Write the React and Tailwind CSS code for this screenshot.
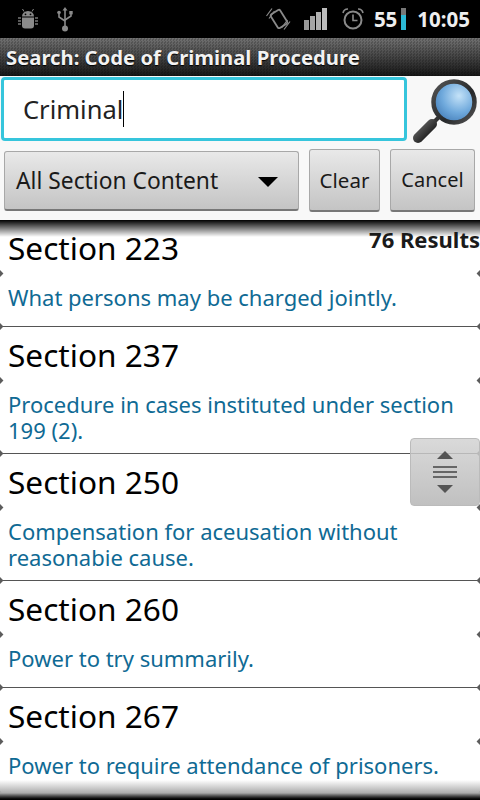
import { useState } from 'react';

const rows = [
  { title: 'Section 223', desc: 'What persons may be charged jointly.', tall: false },
  { title: 'Section 237', desc: 'Procedure in cases instituted under section 199 (2).', tall: true },
  { title: 'Section 250', desc: 'Compensation for aceusation without reasonabie cause.', tall: true },
  { title: 'Section 260', desc: 'Power to try summarily.', tall: false },
  { title: 'Section 267', desc: 'Power to require attendance of prisoners.', tall: false },
];

const Diamond = ({ className }) => (
  <span className={`absolute w-[7px] h-[7px] rotate-45 bg-[#5c5c5c] ${className}`} />
);

const AndroidIcon = () => (
  <svg width="24" height="24" viewBox="0 0 24 24" fill="#8a8a8a">
    <path d="M6 9.5a6 5.5 0 0 1 12 0z" />
    <path d="M8 4.5 6.5 2M16 4.5 17.5 2" stroke="#8a8a8a" strokeWidth="1" />
    <path d="M6 10.5h12v8a3 3 0 0 1-3 3H9a3 3 0 0 1-3-3z" />
    <path d="M2 11h3M2 14h3M2 17h3M19 11h3M19 14h3M19 17h3" stroke="#777" strokeWidth="1.3" />
    <circle cx="9.5" cy="7.3" r=".9" fill="#000" />
    <circle cx="14.5" cy="7.3" r=".9" fill="#000" />
  </svg>
);

const UsbIcon = () => (
  <svg width="18" height="26" viewBox="0 0 18 26" fill="none" stroke="#8a8a8a" strokeWidth="1.6">
    <path d="M9 3v17" />
    <path d="M9 1 6.5 4.5h5z" fill="#8a8a8a" stroke="none" />
    <path d="M3 8v3l6 4M15 8v2l-6 4" />
    <circle cx="3" cy="6.5" r="1.8" fill="#8a8a8a" stroke="none" />
    <rect x="13.3" y="5" width="3.4" height="3.4" fill="#8a8a8a" stroke="none" />
    <circle cx="9" cy="22.5" r="3" fill="#8a8a8a" stroke="none" />
  </svg>
);

const RotateIcon = () => (
  <svg width="26" height="24" viewBox="0 0 26 24" fill="none" stroke="#8a8a8a">
    <rect x="7.5" y="4" width="11" height="16" rx="1.5" strokeWidth="1.8" transform="rotate(-32 13 12)" />
    <path d="M0.5 9 6 1.5M3 11.5 8.5 4M18 22.5l6-8M15.5 21l6-8" strokeWidth="1.2" />
  </svg>
);

const SignalIcon = () => (
  <div className="flex items-end gap-px h-[22px]">
    <span className="w-[5px] h-[10px] bg-[#9a9a9a]" />
    <span className="w-[5px] h-[14px] bg-[#a5a5a5]" />
    <span className="w-[5px] h-[18px] bg-[#b0b0b0]" />
    <span className="w-[5px] h-[22px] bg-[#bcbcbc]" />
  </div>
);

const AlarmIcon = () => (
  <svg width="22" height="24" viewBox="0 0 22 24" fill="none" stroke="#8a8a8a">
    <circle cx="11" cy="13" r="8.5" strokeWidth="2" />
    <path d="M11 7.5V13.5H15.5" strokeWidth="1.6" />
    <path d="M1 6a5 5 0 0 1 5-4M21 6a5 5 0 0 0-5-4" strokeWidth="1.6" />
  </svg>
);

const SearchIcon = () => (
  <svg width="72" height="72" viewBox="0 0 72 72">
    <defs>
      <radialGradient id="lens" cx="0.62" cy="0.35" r="0.75">
        <stop offset="0" stopColor="#c4e2f8" />
        <stop offset="0.55" stopColor="#6fa9dc" />
        <stop offset="1" stopColor="#3f78b4" />
      </radialGradient>
      <linearGradient id="ring" x1="0" y1="0" x2="1" y2="1">
        <stop offset="0" stopColor="#555" />
        <stop offset="0.6" stopColor="#26282a" />
        <stop offset="1" stopColor="#555" />
      </linearGradient>
      <linearGradient id="handle" x1="0" y1="0" x2="1" y2="1">
        <stop offset="0" stopColor="#666" />
        <stop offset="1" stopColor="#111" />
      </linearGradient>
    </defs>
    <path d="M25 47 31 41" stroke="#333" strokeWidth="4" />
    <path d="M10 62 24 48" stroke="url(#handle)" strokeWidth="10" strokeLinecap="round" />
    <circle cx="46" cy="26" r="20.5" fill="url(#lens)" stroke="url(#ring)" strokeWidth="4.5" />
  </svg>
);

const BevelButton = ({ children, className }) => (
  <button className={`flex items-center rounded-[3px] border border-[#a8a8a8] border-b-[#777] border-b-2 bg-gradient-to-b from-[#e9e9e9] to-[#c4c4c4] text-[#1a1a1a] ${className}`}>
    {children}
  </button>
);

const Row = ({ title, desc, tall }) => (
  <div className={`relative border-b border-[#555] box-border flex flex-col ${tall ? 'h-[127px]' : 'h-[107px]'}`}>
    <div className="h-[54px] pl-2 pt-[6px] text-[31.6px] leading-[44px] text-black">{title}</div>
    <div className="pl-2 pr-5 pt-[10px] text-[22px] leading-[26px] text-[#0f6a94]">{desc}</div>
    <Diamond className="left-[-5px] top-[50px]" />
    <Diamond className="right-[-5px] top-[50px]" />
    <Diamond className="left-[-5px] bottom-[-4px]" />
    <Diamond className="right-[-5px] bottom-[-4px]" />
  </div>
);

export default function App() {
  const [query] = useState('Criminal');

  return (
    <div className="relative w-[480px] h-[800px] overflow-hidden bg-white font-['Noto_Sans','Open_Sans',sans-serif]">
      <div className="h-[38px] bg-black flex items-center pl-[16px] pr-[10px]">
        <AndroidIcon />
        <span className="ml-[16px]"><UsbIcon /></span>
        <div className="ml-auto flex items-center">
          <RotateIcon />
          <span className="ml-[12px]"><SignalIcon /></span>
          <span className="ml-[15px]"><AlarmIcon /></span>
          <span className="ml-[10px] text-[20.5px] font-bold text-[#eee]">55</span>
          <span className="ml-[4px] w-[5px] h-[22px] bg-gradient-to-b from-[#777] from-[30%] to-[#2bb9d6] to-[30%]" />
          <span className="ml-[11px] text-[20.5px] font-bold text-[#eee]">10:05</span>
        </div>
      </div>

      <div className="h-[38px] bg-[repeating-conic-gradient(#0000_0_25%,#00000030_0_50%),linear-gradient(#727272,#161616)] [background-size:3px_3px,100%_100%] flex items-center px-[6px] text-[20.25px] font-bold text-[#f2f2f2] [text-shadow:0_1px_1px_#000]">
        Search: Code of Criminal Procedure
      </div>

      <div className="h-[144px] bg-[#f8f8f8] pl-px pt-px">
        <div className="flex items-start h-[64px]">
          <div className="w-[406px] h-[64px] rounded-[4px] border-[3px] border-[#36c5dc] bg-white flex items-center pl-[19px] text-[25.5px] text-[#222]">
            {query}
            <span className="w-px h-[36px] bg-black" />
          </div>
          <span className="ml-px mt-[-1px] shrink-0"><SearchIcon /></span>
        </div>
        <div className="flex items-center mt-[8px] ml-[3px]">
          <BevelButton className="w-[295px] h-[60px] pl-[11px] pt-[3px] text-[22.8px]">
            All Section Content
            <span className="ml-auto mr-[20px] w-0 h-0 border-x-[10px] border-x-transparent border-t-[10px] border-t-black" />
          </BevelButton>
          <BevelButton className="w-[71px] h-[63px] ml-[10px] justify-center text-[20.5px]">Clear</BevelButton>
          <BevelButton className="w-[85px] h-[63px] ml-[10px] justify-center text-[20px]">Cancel</BevelButton>
        </div>
      </div>

      <div className="relative h-[580px] overflow-hidden">
        {rows.map((r) => (
          <Row key={r.title} {...r} />
        ))}
        <div className="absolute inset-x-0 top-0 h-[17px] bg-gradient-to-b from-black to-transparent" />
        <div className="absolute inset-x-0 bottom-0 h-[20px] bg-gradient-to-b from-transparent via-[#aaa] via-[65%] to-black" />
        <div className="absolute right-0 top-[3px] text-[22px] font-bold text-[#1a1a1a]">76 Results</div>
        <div className="absolute right-0 top-[218px] w-[70px] h-[68px] rounded-[4px] border border-[#bbb] bg-gradient-to-b from-[#d0d0d0]/80 to-[#bdbdbd]/95 flex flex-col items-center justify-center">
          <span className="w-0 h-0 border-x-[8px] border-x-transparent border-b-[8px] border-b-[#555]" />
          <span className="mt-[7px] w-[24px] h-[2px] bg-[#666]" />
          <span className="mt-[3px] w-[24px] h-[2px] bg-[#666]" />
          <span className="mt-[3px] w-[24px] h-[2px] bg-[#666]" />
          <span className="mt-[7px] w-0 h-0 border-x-[8px] border-x-transparent border-t-[8px] border-t-[#555]" />
        </div>
      </div>
    </div>
  );
}
